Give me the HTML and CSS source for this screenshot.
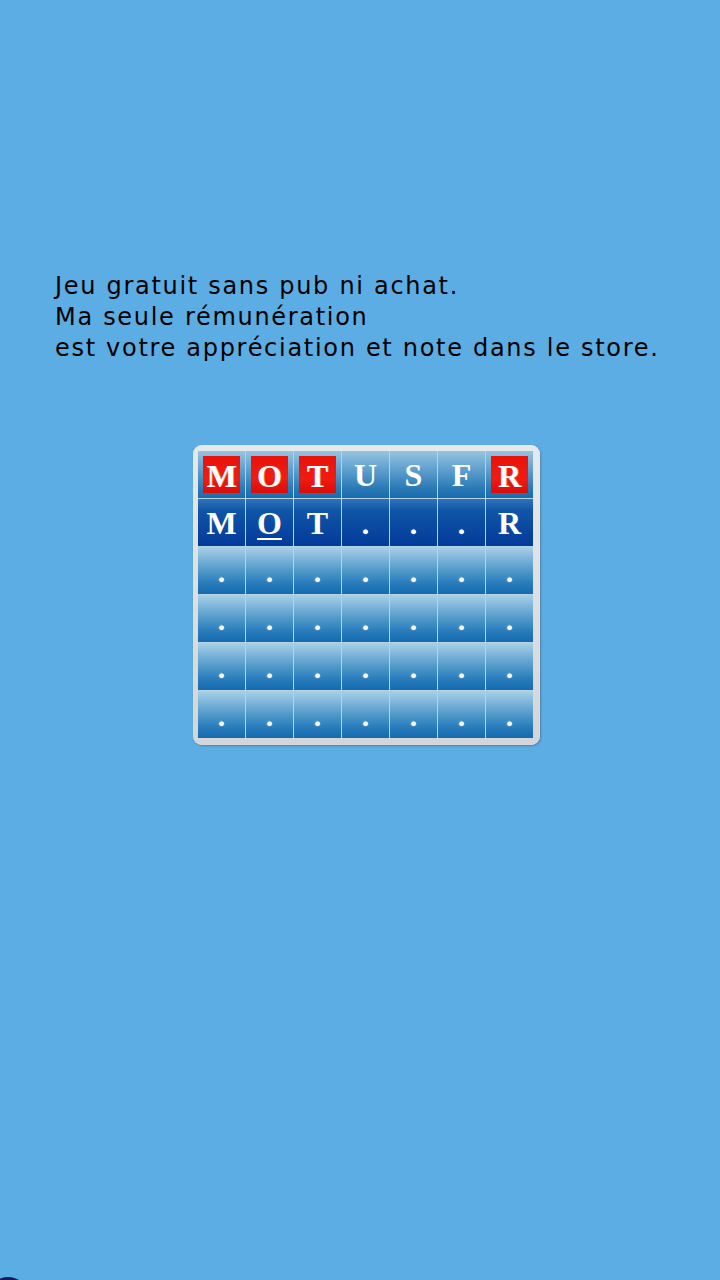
FILE: index.html
```html
<!DOCTYPE html>
<html lang="fr">
<head>
<meta charset="utf-8">
<link rel="stylesheet" href="styles.css">
</head>
<body>
<main class="screen">
  <p class="message">Jeu gratuit sans pub ni achat.<br>Ma seule rémunération<br>est votre appréciation et note dans le store.</p>
  <div class="board">
    <div class="grid">
      <div class="cell row1"><span class="tile">M</span></div>
      <div class="cell row1"><span class="tile">O</span></div>
      <div class="cell row1"><span class="tile">T</span></div>
      <div class="cell row1"><span class="plain">U</span></div>
      <div class="cell row1"><span class="plain">S</span></div>
      <div class="cell row1"><span class="plain">F</span></div>
      <div class="cell row1"><span class="tile">R</span></div>

      <div class="cell row2"><span class="plain">M</span></div>
      <div class="cell row2"><span class="plain under">O</span></div>
      <div class="cell row2"><span class="plain">T</span></div>
      <div class="cell row2"><span class="dot">.</span></div>
      <div class="cell row2"><span class="dot">.</span></div>
      <div class="cell row2"><span class="dot">.</span></div>
      <div class="cell row2"><span class="plain">R</span></div>

      <div class="cell"><span class="dot">.</span></div>
      <div class="cell"><span class="dot">.</span></div>
      <div class="cell"><span class="dot">.</span></div>
      <div class="cell"><span class="dot">.</span></div>
      <div class="cell"><span class="dot">.</span></div>
      <div class="cell"><span class="dot">.</span></div>
      <div class="cell"><span class="dot">.</span></div>

      <div class="cell"><span class="dot">.</span></div>
      <div class="cell"><span class="dot">.</span></div>
      <div class="cell"><span class="dot">.</span></div>
      <div class="cell"><span class="dot">.</span></div>
      <div class="cell"><span class="dot">.</span></div>
      <div class="cell"><span class="dot">.</span></div>
      <div class="cell"><span class="dot">.</span></div>

      <div class="cell"><span class="dot">.</span></div>
      <div class="cell"><span class="dot">.</span></div>
      <div class="cell"><span class="dot">.</span></div>
      <div class="cell"><span class="dot">.</span></div>
      <div class="cell"><span class="dot">.</span></div>
      <div class="cell"><span class="dot">.</span></div>
      <div class="cell"><span class="dot">.</span></div>

      <div class="cell"><span class="dot">.</span></div>
      <div class="cell"><span class="dot">.</span></div>
      <div class="cell"><span class="dot">.</span></div>
      <div class="cell"><span class="dot">.</span></div>
      <div class="cell"><span class="dot">.</span></div>
      <div class="cell"><span class="dot">.</span></div>
      <div class="cell"><span class="dot">.</span></div>
    </div>
  </div>
  <div class="corner"></div>
</main>
</body>
</html>
```

FILE: styles.css
```css
html, body {
  margin: 0;
  padding: 0;
}

body {
  background: #5cade3;
  font-family: "DejaVu Sans", sans-serif;
}

.screen {
  position: relative;
  width: 720px;
  height: 1280px;
  overflow: hidden;
  display: flex;
  flex-direction: column;
  align-items: flex-start;
}

.message {
  margin: 271px 0 0 55px;
  font-size: 24px;
  line-height: 31px;
  letter-spacing: 1.7px;
  color: #000;
}

.board {
  margin: 81px 0 0 193px;
  padding: 6px 7px 7px 5px;
  background: linear-gradient(#e6e9ec, #d2d6da);
  border-radius: 9px;
  box-shadow: 1px 1px 2px rgba(60, 80, 100, 0.45), inset 0 0 1px rgba(255,255,255,0.8);
}

.grid {
  display: grid;
  grid-template-columns: repeat(7, 47px);
  grid-template-rows: repeat(6, 47px);
  gap: 1px;
  background: #b3d3e6;
}

.cell {
  position: relative;
  display: flex;
  align-items: center;
  justify-content: center;
  background: linear-gradient(#a9d0e6 0%, #6aa9d3 35%, #2a7ebd 75%, #1669ab 100%);
  font-family: "Liberation Serif", "Times New Roman", serif;
  font-weight: bold;
  color: #fff;
}

.cell.row1 {
  background: linear-gradient(#94c4e2 0%, #5f9fcd 40%, #2a79b7 80%, #1b6bac 100%);
}

.cell.row2 {
  background: linear-gradient(#2f74bb 0%, #0f55a6 25%, #0845a0 70%, #033b98 100%);
}

.tile {
  width: 37px;
  height: 37px;
  display: flex;
  align-items: center;
  justify-content: center;
  background: linear-gradient(#e8120b, #f01c12 60%, #d80c08);
  font-size: 32px;
  line-height: 1;
  padding-top: 3px;
  box-sizing: border-box;
  text-shadow: 1px 0 0 rgba(255, 160, 120, 0.6);
}

.plain {
  font-size: 32px;
  line-height: 1;
  padding-top: 2px;
  margin-bottom: 2px;
}

.under {
  text-decoration: underline;
  text-decoration-thickness: 2px;
  text-underline-offset: 4px;
}

.dot {
  font-size: 28px;
  line-height: 1;
  margin-top: 4px;
  text-shadow: 0 0 1px #fff;
}

.corner {
  position: absolute;
  left: -10px;
  bottom: -27px;
  width: 36px;
  height: 30px;
  border-radius: 50%;
  background: #141a5e;
}
```
